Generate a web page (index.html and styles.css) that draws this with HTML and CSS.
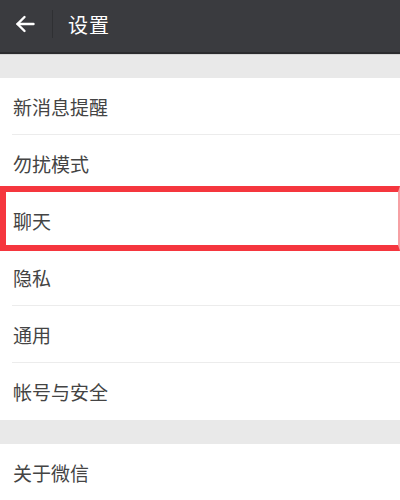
FILE: index.html
```html
<!DOCTYPE html>
<html lang="zh-CN">
<head>
<meta charset="utf-8">
<title>设置</title>
<link rel="stylesheet" href="styles.css">
</head>
<body>
<div class="app">
  <header class="topbar">
    <div class="back">
      <svg width="20" height="18" viewBox="0 0 20 18" fill="none" stroke="#ffffff" stroke-width="2.4" stroke-linecap="round" stroke-linejoin="round">
        <path d="M18.5 9H2.5"/>
        <path d="M9.5 2L2.5 9L9.5 16"/>
      </svg>
    </div>
    <div class="sep"></div>
    <div class="title">设置</div>
  </header>
  <div class="gap"></div>
  <ul class="list">
    <li class="row">新消息提醒</li>
    <li class="row">勿扰模式</li>
    <li class="row hl">聊天</li>
    <li class="row">隐私</li>
    <li class="row">通用</li>
    <li class="row last">帐号与安全</li>
  </ul>
  <div class="gap2"></div>
  <ul class="list">
    <li class="row last">关于微信</li>
  </ul>
</div>
</body>
</html>
```
FILE: styles.css
```css
* { box-sizing: border-box; }
html, body { margin: 0; padding: 0; }
body {
  width: 400px;
  height: 500px;
  overflow: hidden;
  background: #ffffff;
  font-family: "Noto Sans CJK SC", "Noto Sans", sans-serif;
}
.app { display: flex; flex-direction: column; }
.topbar {
  height: 54px;
  background: #3a3b3f;
  border-bottom: 2px solid #2b2b2e;
  display: flex;
  align-items: center;
  position: relative;
}
.topbar::after {
  content: "";
  position: absolute;
  left: 0; right: 0; bottom: -3px;
  height: 1px;
  background: #d6d6d6;
}
.back {
  width: 52px;
  display: flex;
  justify-content: center;
  margin-top: -4px;
}
.back svg { margin-left: -2px; }
.sep {
  width: 1px;
  height: 28px;
  background: #2f3033;
  margin-top: -4px;
}
.title {
  margin-left: 15px;
  color: #ffffff;
  font-size: 20px;
  margin-top: -4px;
  letter-spacing: 1px;
}
.gap {
  height: 23px;
  margin-top: 1px;
  background: #e9e9e9;
}
.gap2 {
  height: 24px;
  background: #e9e9e9;
}
.list { list-style: none; margin: 0; padding: 0; }
.row {
  height: 57px;
  display: flex;
  align-items: center;
  padding-left: 13px;
  font-size: 19px;
  color: #444444;
  position: relative;
  padding-bottom: 1px;
}
.row::before {
  content: "";
  position: absolute;
  left: 12px; right: 0; bottom: 0;
  height: 1px;
  background: #ececec;
}
.row.last::before { display: none; }
.row.hl::after {
  content: "";
  position: absolute;
  left: 0; right: 0; top: -6px; bottom: -2px;
  border: 6px solid #f5363e;
  border-right-width: 2px;
  border-right-color: #f7a0a4;
}
```
